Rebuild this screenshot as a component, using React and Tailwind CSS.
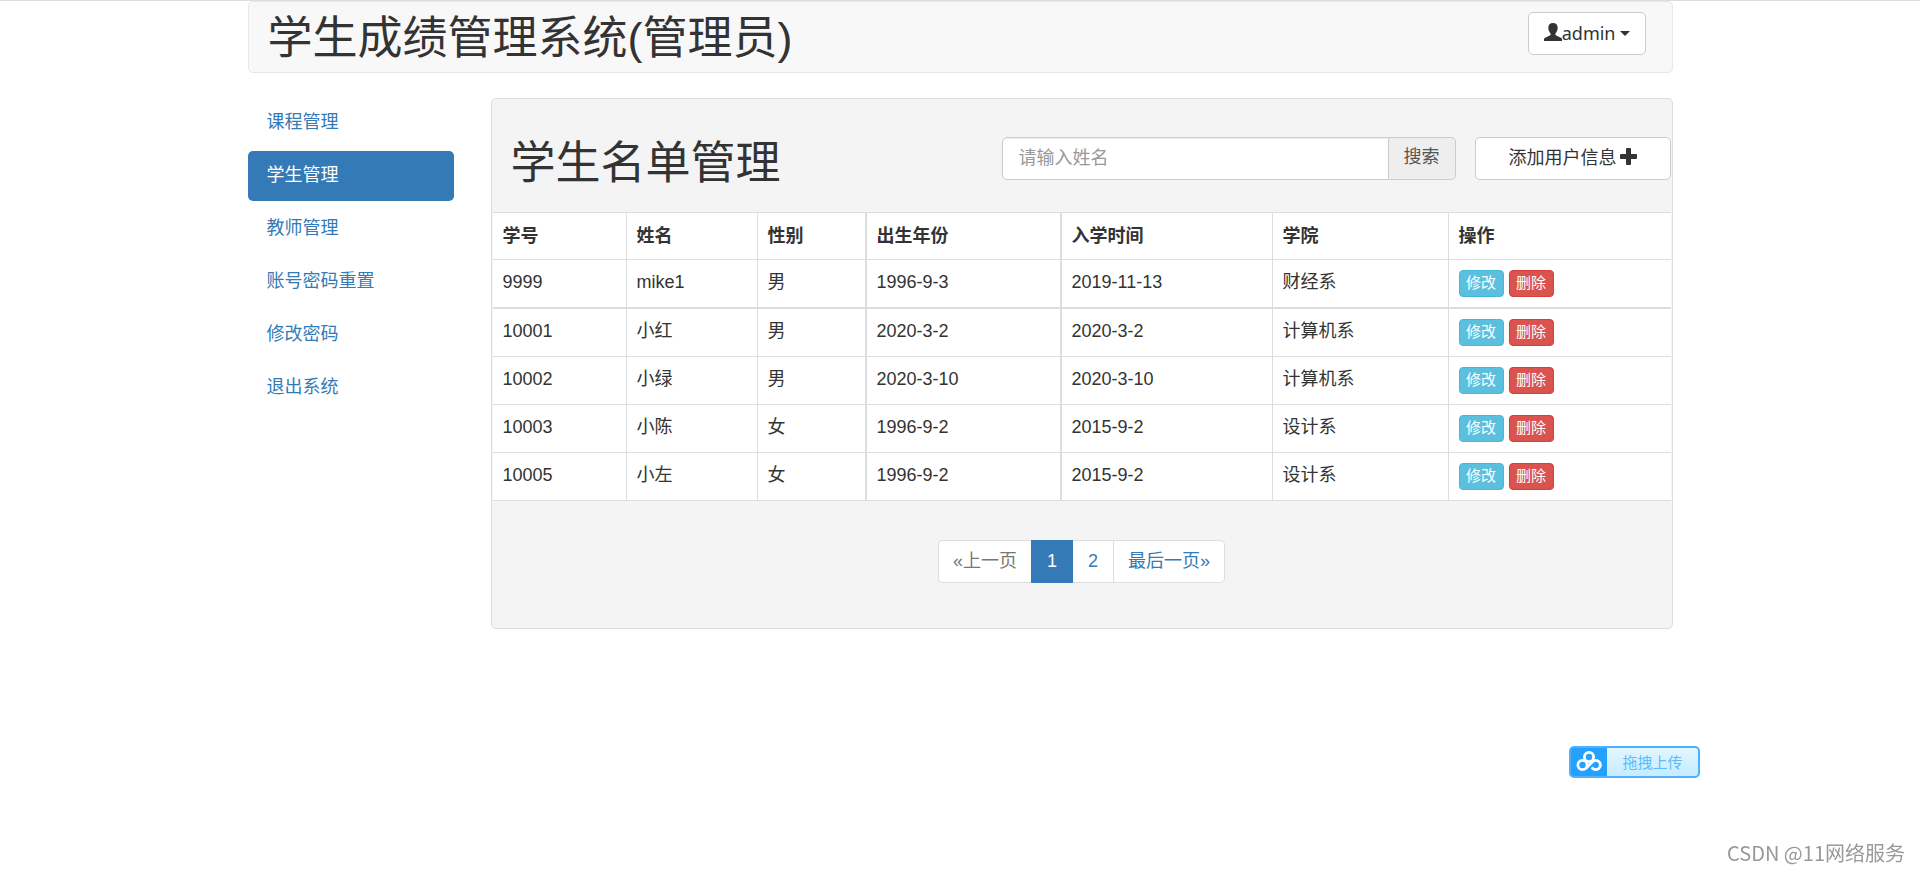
const NAV_LINKS = ['课程管理', '学生管理', '教师管理', '账号密码重置', '修改密码', '退出系统']

const COLUMNS = [
  { key: 'id', label: '学号', width: 'w-[134px]' },
  { key: 'name', label: '姓名', width: 'w-[131px]' },
  { key: 'sex', label: '性别', width: 'w-[109px]', wide: true },
  { key: 'birth', label: '出生年份', width: 'w-[195px]', wide: true },
  { key: 'entry', label: '入学时间', width: 'w-[211px]' },
  { key: 'college', label: '学院', width: 'w-[176px]' },
]

const STUDENTS = [
  { id: '9999', name: 'mike1', sex: '男', birth: '1996-9-3', entry: '2019-11-13', college: '财经系' },
  { id: '10001', name: '小红', sex: '男', birth: '2020-3-2', entry: '2020-3-2', college: '计算机系' },
  { id: '10002', name: '小绿', sex: '男', birth: '2020-3-10', entry: '2020-3-10', college: '计算机系' },
  { id: '10003', name: '小陈', sex: '女', birth: '1996-9-2', entry: '2015-9-2', college: '设计系' },
  { id: '10005', name: '小左', sex: '女', birth: '1996-9-2', entry: '2015-9-2', college: '设计系' },
]

function UserIcon() {
  return (
    <svg viewBox="0 0 18 18" className="mb-1 h-[18px] w-[18px] fill-current" aria-hidden="true">
      <path d="M9 0C6 0 4.300 1.800 4.300 4.800c0 2.200.8 4.200 2 5.400.5.500.5 1.600 0 2L1.200 14.700C.3 15.200 0 15.500 0 16.400V18h18v-1.600c0-.9-.3-1.200-1.200-1.700l-5.100-2.500c-.5-.4-.5-1.500 0-2 1.200-1.200 2-3.200 2-5.400C13.700 1.800 12 0 9 0z" />
    </svg>
  )
}

function PlusIcon() {
  return (
    <svg viewBox="0 0 17 17" className="mb-1 h-[17px] w-[17px] fill-current" aria-hidden="true">
      <rect x="6" y="0" width="5" height="17" rx="1" />
      <rect x="0" y="6" width="17" height="5" rx="1" />
    </svg>
  )
}

function CloudLogo() {
  return (
    <svg viewBox="0 0 26 21" className="mb-px h-[21px] w-[26px]" fill="none" stroke="#fff" strokeWidth="2.800" aria-hidden="true">
      <circle cx="13" cy="6" r="4.600" />
      <circle cx="6.500" cy="14" r="4.600" />
      <path d="M14.800 15.200 16.600 10.500a4.600 4.600 0 1 1-.3 6.800M10 17l6.600-6.500" strokeLinecap="round" stroke="none" />
      <path d="M10.500 16.800 16.500 10.800a4.600 4.600 0 1 1 0 6.400" strokeLinecap="round" />
    </svg>
  )
}

function Header() {
  return (
    <header className="flex items-start justify-between rounded-[5px] border border-[#e7e7e7] bg-[#f8f8f8] pr-[26px] pl-[19px]">
      <h1 className="pt-3 pb-2 text-[45px] leading-[50px] font-normal">学生成绩管理系统(管理员)</h1>
      <button
        type="button"
        className="mt-[10px] flex h-[43px] items-center rounded-[5px] border border-[#ccc] bg-white px-[15px] font-['Noto_Sans','Noto_Sans_CJK_SC',sans-serif]"
      >
        <UserIcon />
        admin
        <span className="ml-1 border-x-[5px] border-t-[5px] border-x-transparent border-t-[#333]" />
      </button>
    </header>
  )
}

function Sidebar() {
  return (
    <nav className="w-[206px] shrink-0">
      <ul className="flex flex-col gap-[3px]">
        {NAV_LINKS.map((label) => (
          <li key={label}>
            <a
              href="#"
              className={`block rounded-[5px] px-[19px] pt-3 pb-[13px] ${label === '学生管理' ? 'bg-[#337ab7] text-white' : 'text-[#337ab7]'}`}
            >
              {label}
            </a>
          </li>
        ))}
      </ul>
    </nav>
  )
}

function StudentTable() {
  return (
    <div className="px-px">
      <table className="w-full table-fixed border-separate border-spacing-0 border-t border-[#ddd] bg-white text-left">
        <thead>
          <tr>
            {COLUMNS.map((col) => (
              <th key={col.key} className={`h-[47px] border-b border-[#ddd] px-[10px] font-bold ${col.width} ${col.wide ? 'border-r-2' : 'border-r'}`}>
                {col.label}
              </th>
            ))}
            <th className="h-[47px] border-b border-[#ddd] px-[10px] font-bold">操作</th>
          </tr>
        </thead>
        <tbody>
          {STUDENTS.map((student, i) => {
            const line = i === 0 ? 'h-[49px] border-b-2' : 'h-12 border-b'
            return (
              <tr key={student.id}>
                {COLUMNS.map((col) => (
                  <td key={col.key} className={`border-[#ddd] px-[10px] pb-[2px] ${line} ${col.wide ? 'border-r-2' : 'border-r'}`}>
                    {student[col.key]}
                  </td>
                ))}
                <td className={`border-[#ddd] px-[10px] ${line}`}>
                  <div className="flex gap-[5px] text-[15px] leading-[22px] text-white">
                    <button type="button" className="w-[45px] rounded-[4px] border border-[#46b8da] bg-[#5bc0de] pt-px pb-[2px]">修改</button>
                    <button type="button" className="w-[45px] rounded-[4px] border border-[#d43f3a] bg-[#d9534f] pt-px pb-[2px]">删除</button>
                  </div>
                </td>
              </tr>
            )
          })}
        </tbody>
      </table>
    </div>
  )
}

function Pagination() {
  return (
    <nav className="flex justify-center pt-[39px] pb-[45px]">
      <ul className="flex h-[43px] leading-[41px]">
        <li className="rounded-l-[5px] border border-r-0 border-[#ddd] bg-white px-[14px]">
          <a href="#" className="text-[#777]">«上一页</a>
        </li>
        <li className="border border-[#337ab7] bg-[#337ab7] px-[15px]">
          <a href="#" className="text-white">1</a>
        </li>
        <li className="border border-l-0 border-[#ddd] bg-white px-[15px]">
          <a href="#" className="text-[#337ab7]">2</a>
        </li>
        <li className="rounded-r-[5px] border border-l-0 border-[#ddd] bg-white px-[14px]">
          <a href="#" className="text-[#337ab7]">最后一页»</a>
        </li>
      </ul>
    </nav>
  )
}

export default function App() {
  return (
    <div className="min-h-screen border-t border-[#ddd] bg-white font-['Liberation_Sans','Noto_Sans_CJK_SC',sans-serif] text-[18px] leading-[25px] text-[#333]">
      <div className="mx-auto max-w-[1425px]">
        <Header />

        <div className="mt-[25px] flex items-start gap-[37px]">
          <Sidebar />

          <main className="min-w-0 flex-1 rounded-[5px] border border-[#ddd] bg-[#f4f4f4]">
            <div className="flex items-center pt-[26px] pr-px pb-[21px] pl-[19px]">
              <h2 className="flex-1 pt-3 text-[45px] leading-[54px] font-normal">学生名单管理</h2>
              <form className="flex h-[43px] w-[454px]">
                <input
                  type="text"
                  aria-label="请输入姓名"
                  placeholder="请输入姓名"
                  className="min-w-0 flex-1 rounded-l-[5px] border border-[#ccc] bg-white px-4 shadow-[inset_0_1px_1px_rgba(0,0,0,0.075)] placeholder:text-[#999]"
                />
                <button type="submit" className="rounded-r-[5px] border border-l-0 border-[#ccc] bg-[#eee] px-[15px] pb-[2px] text-[#555]">搜索</button>
              </form>
              <button type="button" className="ml-[19px] flex h-[43px] w-[196px] items-center justify-center gap-[3px] rounded-[5px] border border-[#ccc] bg-white">
                添加用户信息
                <PlusIcon />
              </button>
            </div>
            <StudentTable />
            <Pagination />
          </main>
        </div>
      </div>

      {/* Floating upload widget */}
      <button
        type="button"
        className="fixed right-[220px] bottom-[94px] flex h-8 w-[131px] items-stretch overflow-hidden rounded-[5px] border-2 border-[#4db1ff] bg-[#24a1ff] text-[15px]"
      >
        <span className="flex w-[36px] items-center justify-center">
          <CloudLogo />
        </span>
        <span className="flex flex-1 items-center justify-center bg-linear-to-b from-[#e2f6ff] to-[#c6ecff] text-[#5bbcff]">拖拽上传</span>
      </button>

      <p className="fixed right-[15px] bottom-[7px] font-['Noto_Sans_CJK_SC',sans-serif] text-[20px] text-[#999]">CSDN @11网络服务</p>
    </div>
  )
}
